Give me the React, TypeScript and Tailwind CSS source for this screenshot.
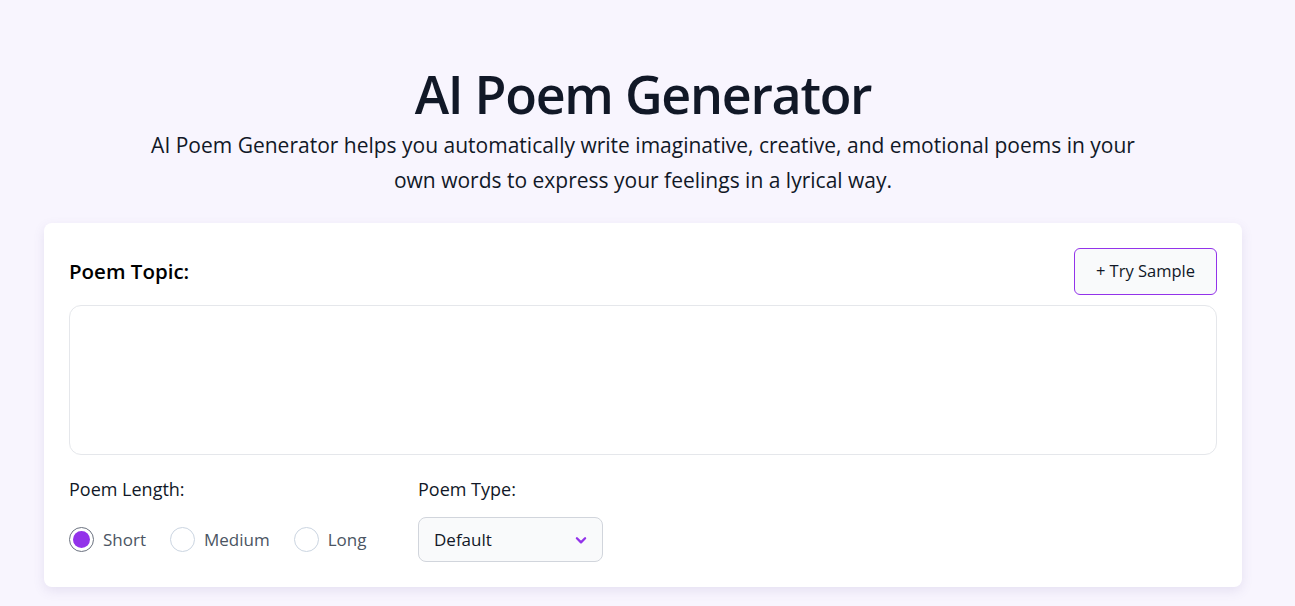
import React, { useState } from 'react';

const LENGTHS = ['Short', 'Medium', 'Long'];

export default function App() {
  const [length, setLength] = useState('Short');
  const [topic, setTopic] = useState('');

  return (
    <div
      className="min-h-screen bg-[#f8f5fe] text-gray-900"
      style={{ fontFamily: '"Open Sans", "Noto Sans", sans-serif' }}
    >
      <div className="pt-[62px] px-[44px] pr-[53px]">
        {/* Header */}
        <div className="text-center">
          <h1 className="text-[52px] leading-[64px] font-semibold text-[#111827] tracking-tight">AI Poem Generator</h1>
          <p className="mt-[2px] mx-auto max-w-[1010px] text-[21px] leading-[35px] text-[#111827]">
            AI Poem Generator helps you automatically write imaginative, creative, and emotional poems in your own words to express your feelings in a lyrical way.
          </p>
        </div>

        {/* Card */}
        <div className="mt-[25px] bg-white rounded-lg shadow-[0_4px_12px_rgba(100,80,160,0.12)] p-[25px]">
          <div className="flex items-center justify-between">
            <label className="text-[20.5px] font-semibold text-black">Poem Topic:</label>
            <button className="h-[47px] px-[21px] rounded-md border border-[#9333ea] bg-[#f9fafb] text-[16.5px] text-[#111827]">
              + Try Sample
            </button>
          </div>

          <textarea
            value={topic}
            onChange={(e) => setTopic(e.target.value)}
            className="mt-[10px] block w-full h-[150px] rounded-xl border border-gray-200 resize-none outline-none p-3"
          />

          <div className="mt-[21px] flex">
            <div className="w-[349px]">
              <div className="text-[18px] text-[#111827]">Poem Length:</div>
              <div className="mt-[24px] flex items-center gap-[24px]">
                {LENGTHS.map((l) => {
                  const active = l === length;
                  return (
                    <button key={l} onClick={() => setLength(l)} className="flex items-center gap-[9px]">
                      <span className={`w-[25px] h-[25px] rounded-full border flex items-center justify-center ${active ? 'border-[#6b7280]' : 'border-[#cbd5e1]'}`}>
                        {active && <span className="w-[17px] h-[17px] rounded-full bg-[#9333ea]" />}
                      </span>
                      <span className="text-[17px] text-[#4b5563]">{l}</span>
                    </button>
                  );
                })}
              </div>
            </div>
            <div>
              <div className="text-[18px] text-[#111827]">Poem Type:</div>
              <div className="mt-[14px] w-[185px] h-[45px] rounded-lg border border-gray-300 bg-[#f9fafb] flex items-center justify-between pl-[15px] pr-[14px]">
                <span className="text-[17px] text-[#111827]">Default</span>
                <svg width="14" height="14" viewBox="0 0 24 24" fill="none" stroke="#9333ea" strokeWidth="4" strokeLinecap="round" strokeLinejoin="round">
                  <path d="M5 9l7 7 7-7" />
                </svg>
              </div>
            </div>
          </div>
        </div>
      </div>
    </div>
  );
}
